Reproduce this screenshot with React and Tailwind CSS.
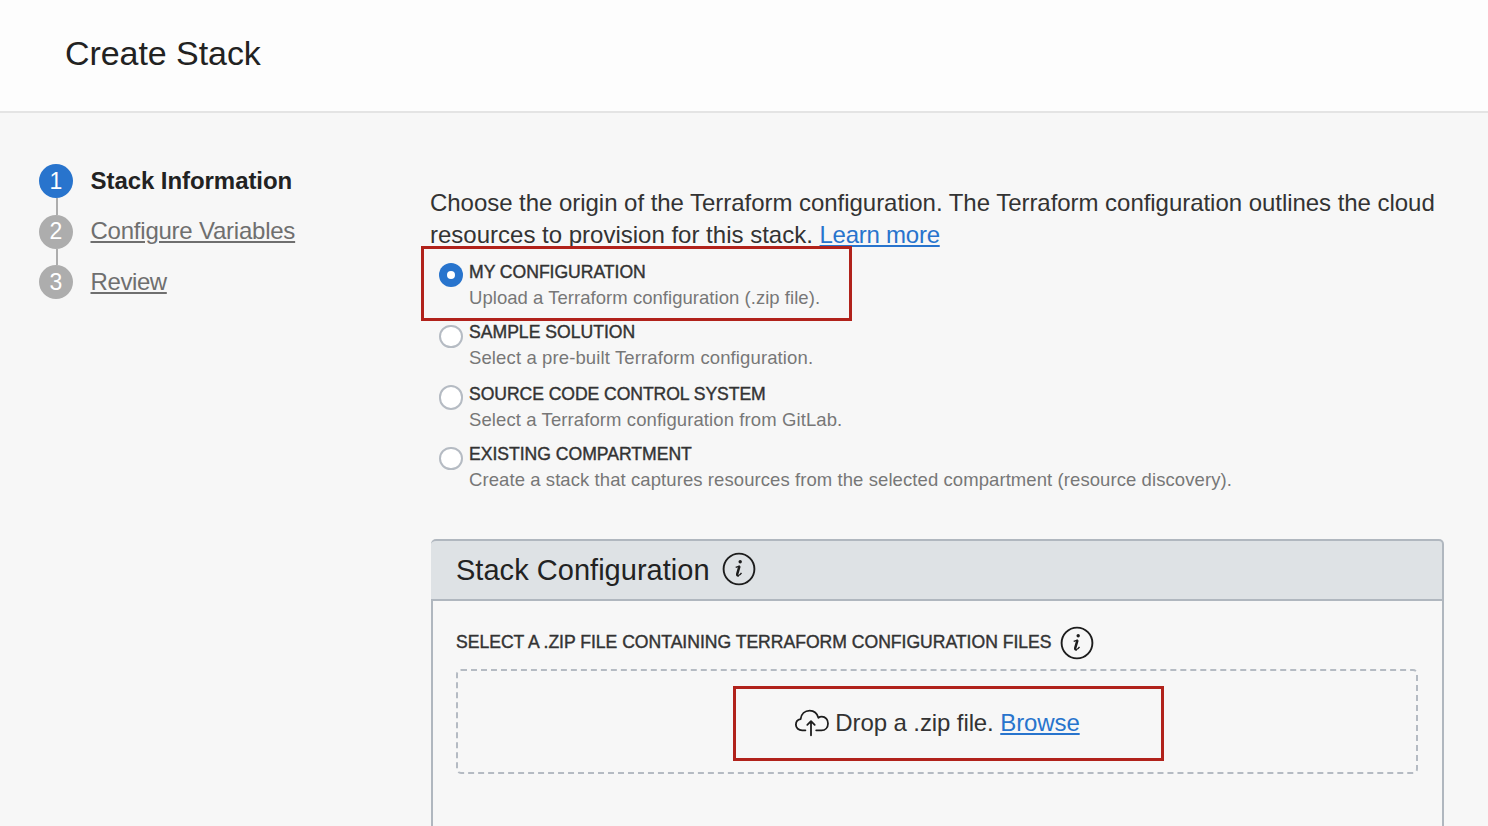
const steps = [
  { n: 1, label: 'Stack Information', active: true, track: 'tracking-[-0.06px] leading-[33px]' },
  { n: 2, label: 'Configure Variables', track: 'tracking-[-0.23px] leading-[32px]' },
  { n: 3, label: 'Review', track: 'tracking-[-0.4px] leading-[33px]' },
];

const options = [
  {
    title: 'MY CONFIGURATION',
    titleTrack: 'tracking-[-0.03px]',
    text: 'Upload a Terraform configuration (.zip file).',
    textTrack: 'tracking-[0.04px]',
    selected: true,
    height: 'h-[60px]',
    radio: 'mt-[3px] size-6',
  },
  {
    title: 'SAMPLE SOLUTION',
    titleTrack: 'tracking-[0px]',
    text: 'Select a pre-built Terraform configuration.',
    textTrack: 'tracking-[0.12px]',
    height: 'h-[62px]',
    radio: 'mt-[5px] h-[23px] w-6',
  },
  {
    title: 'SOURCE CODE CONTROL SYSTEM',
    titleTrack: 'tracking-[-0.07px]',
    text: 'Select a Terraform configuration from GitLab.',
    textTrack: 'tracking-[0.1px]',
    height: 'h-[60px]',
    radio: 'mt-[3px] h-[25px] w-6',
  },
  {
    title: 'EXISTING COMPARTMENT',
    titleTrack: 'tracking-[-0.02px]',
    text: 'Create a stack that captures resources from the selected compartment (resource discovery).',
    textTrack: 'tracking-[0.08px]',
    height: 'h-[60px]',
    radio: 'mt-[5px] h-[23px] w-6',
  },
];

function InfoIcon({ className }) {
  return (
    <svg viewBox="0 0 34 34" className={`size-[34px] shrink-0 ${className}`} fill="none" stroke="#1d1d1d">
      <circle cx="17" cy="17" r="15.4" strokeWidth="1.9" />
      <circle cx="18.200" cy="9.800" r="1.700" fill="#1d1d1d" stroke="none" />
      <path d="M13.700 15.300c1.300-.4 2.800-.9 4.200-1.500" strokeWidth="1.300" />
      <path d="M17.500 14.100l-2.200 7.600c-.3 1.500.3 2 1.200 1.600" strokeWidth="2.500" />
      <path d="M16 23.700c1.500-.3 2.600-1.400 3.500-2.900" strokeWidth="1.300" />
    </svg>
  );
}

function CloudUploadIcon() {
  return (
    <svg viewBox="0 0 36 28" className="mt-px h-7 w-9 shrink-0" fill="none" stroke="#1d1d1d" strokeWidth="1.800" strokeLinecap="round" strokeLinejoin="round">
      <path d="M11.400 21.300H8.200C4.600 21.300 1.900 19 1.900 15.700c0-2.900 1.900-5.100 4.700-5.500C7.200 5 10.900 1.600 15.700 1.600c4.100 0 7.400 2.500 8.700 7.200 1-.8 2-1.100 3.400-1.100 3.700 0 6.200 3 6.200 6.700 0 4-2.700 6.900-6.500 6.900h-5.300" />
      <path d="M17 26.300V12.400M13.300 15.800l3.700-3.700 3.700 3.700" />
    </svg>
  );
}

export default function App() {
  return (
    <div className="relative flex h-[826px] w-[1488px] flex-col overflow-hidden bg-[#f7f7f7] font-['Liberation_Sans',Arial,sans-serif] text-[#333]">
      <header className="h-[113px] shrink-0 border-b-2 border-[#e4e4e4] bg-[#fdfdfd] pt-[33px] pl-[65px]">
        <h1 className="text-[34px] leading-10 tracking-[-0.06px] text-[#222]">Create Stack</h1>
      </header>

      <div className="flex grow">
        <nav className="w-[430px] shrink-0 pt-[51px] pl-[39px]">
          <ol>
            {steps.map((s, i) => (
              <li key={s.n} className="flex gap-[17.5px]">
                <div className="flex w-[34px] flex-col items-center">
                  <span className={`flex size-[34px] items-center justify-center rounded-full text-[23px] leading-none text-white ${s.active ? 'bg-[#2874cd]' : 'bg-[#adadad]'}`}>
                    {s.n}
                  </span>
                  {i < 2 && <span className="ml-[2px] h-[16.700px] w-[2px] bg-[#adadad]" />}
                </div>
                <a className={`h-[34px] text-2xl whitespace-nowrap ${s.track} ${s.active ? 'font-bold text-[#222]' : 'text-[#6f6f6f] underline decoration-2 underline-offset-2'}`}>
                  {s.label}
                </a>
              </li>
            ))}
          </ol>
        </nav>

        <main className="flex w-[1014px] shrink-0 flex-col pt-[74px]">
          <p className="h-16 text-2xl leading-8 whitespace-nowrap">
            <span className="tracking-[-0.04px]">Choose the origin of the Terraform configuration. The Terraform configuration outlines the cloud</span>
            <br />
            <span>resources to provision for this stack.</span>{' '}
            <a className="tracking-[-0.25px] text-[#2874cd] underline decoration-2 underline-offset-2">Learn more</a>
          </p>

          <div className="pt-[9px] pl-[9px]">
            {options.map((o) => (
              <label key={o.title} className={`flex gap-[6px] ${o.height}`}>
                <span className={`flex shrink-0 items-center justify-center rounded-full ${o.radio} ${o.selected ? 'bg-[#2874cd]' : 'border-2 border-[#b5bbc3] bg-white'}`}>
                  {o.selected && <span className="size-2 rounded-full bg-white" />}
                </span>
                <span className="-mt-px flex flex-col whitespace-nowrap">
                  <span className={`text-[17.6px] leading-[26px] [-webkit-text-stroke:0.4px_#333] ${o.titleTrack}`}>{o.title}</span>
                  <span className={`text-[18.5px] leading-[26px] text-[#777] ${o.textTrack}`}>{o.text}</span>
                </span>
              </label>
            ))}
          </div>

          <section className="mt-[37px] ml-px flex grow flex-col">
            <div className="flex h-[62px] items-center rounded-t-[5px] border-y-2 border-r-2 border-[#b0b7bf] bg-[#dee2e5] pl-[25px]">
              <h2 className="text-[29px] leading-9 tracking-[0.03px] text-[#222]">Stack Configuration</h2>
              <InfoIcon className="-mt-[2px] ml-3" />
            </div>
            <div className="grow border-x-2 border-[#b0b7bf] pt-[25px] pr-[24px] pl-[23px]">
              <div className="flex h-[34px] items-center">
                <span className="-mt-[2px] w-[596px] text-[17.6px] tracking-[-0.02px] whitespace-nowrap [-webkit-text-stroke:0.4px_#333]">
                  SELECT A .ZIP FILE CONTAINING TERRAFORM CONFIGURATION FILES
                </span>
                <InfoIcon className="ml-2" />
              </div>
              <div className="mt-[9px] flex h-[105px] items-center justify-center rounded-[5px] border-2 border-dashed border-[#b5bbc3] pt-[2px] text-2xl">
                <CloudUploadIcon />
                <span className="ml-[5px] tracking-[-0.1px] whitespace-nowrap">
                  Drop a .zip file. <a className="text-[#2874cd] underline decoration-2 underline-offset-2">Browse</a>
                </span>
              </div>
            </div>
          </section>
        </main>
      </div>

      <div className="absolute top-[246px] left-[421px] h-[75px] w-[431px] border-3 border-[#b1221b]" />
      <div className="absolute top-[686px] left-[733px] h-[75px] w-[431px] border-3 border-[#b1221b]" />
    </div>
  );
}
